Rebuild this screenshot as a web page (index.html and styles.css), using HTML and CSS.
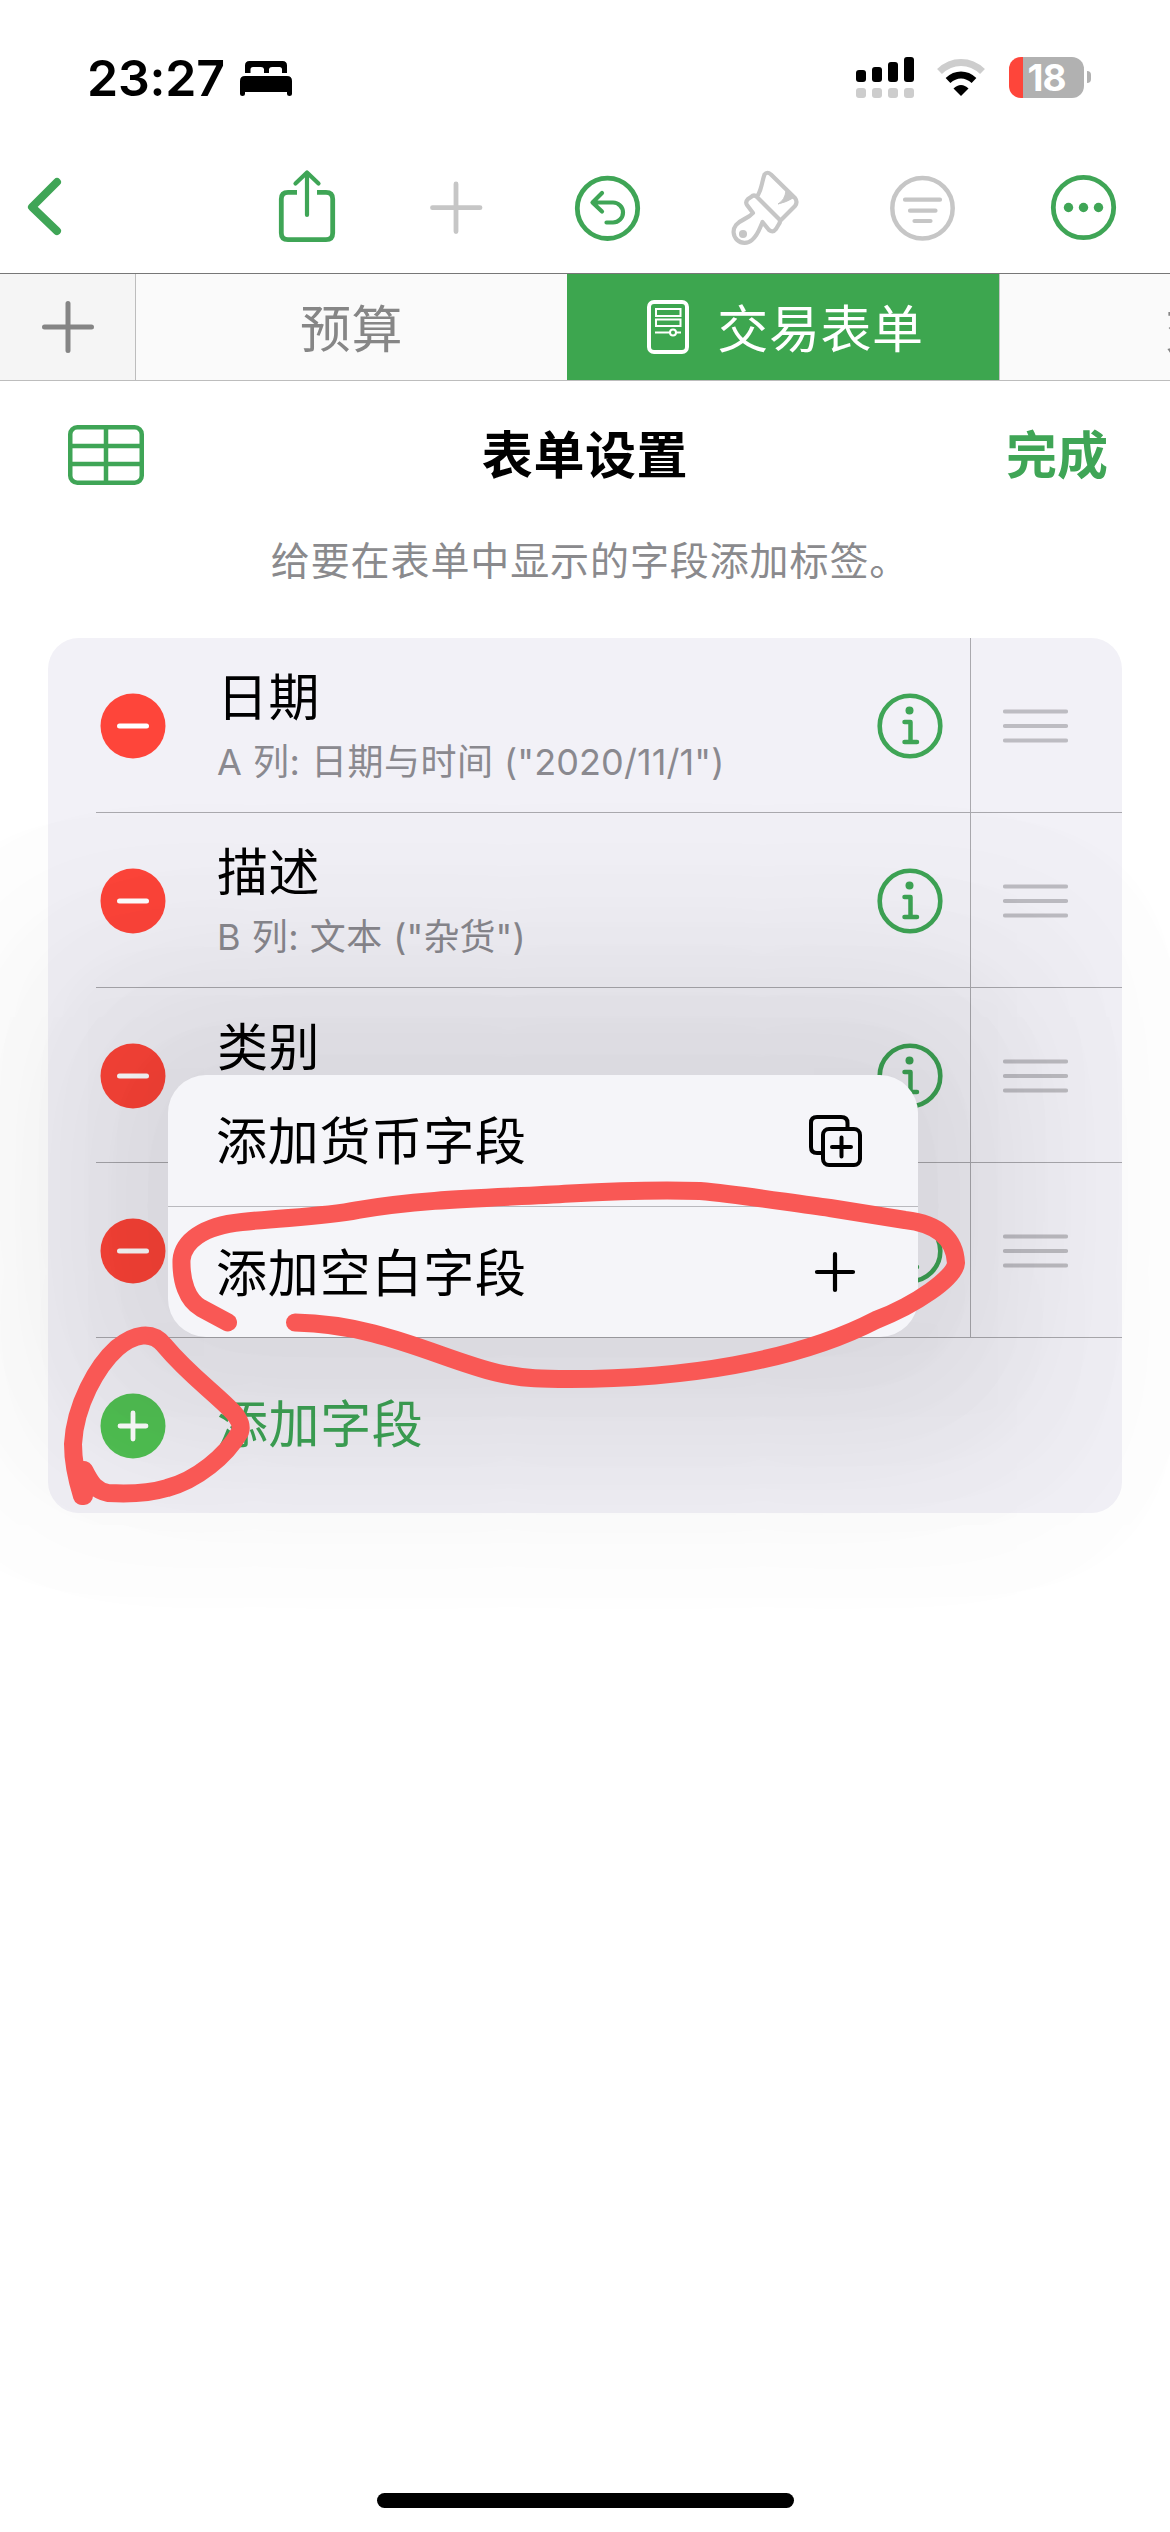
FILE: index.html
```html
<!DOCTYPE html>
<html lang="zh-CN">
<head>
<meta charset="utf-8">
<title>表单设置</title>
<link rel="stylesheet" href="styles.css">
</head>
<body>
<div class="screen">
  <header class="status">
    <span class="time">23:27</span>
    <svg class="bed" width="52" height="35" viewBox="0 0 52 35"><path d="M5 12V4.500Q5 0 9.500 0H42.500Q47 0 47 4.500V12H42V8.500Q42 6 39.500 6H32Q29.500 6 29 8V12H24V8Q23.500 6 21 6H13Q10.500 6 10.500 8.500V12Z"/><path d="M0 33V20Q0 15 5 15H47Q52 15 52 20V33Q52 35 49.500 35Q47 35 47 33V31H5V33Q5 35 2.500 35Q0 35 0 33Z"/></svg>
    <svg class="signal" width="58" height="41" viewBox="0 0 58 41"><rect x="0" y="13" width="10" height="12" rx="3"/><rect x="16" y="10" width="10" height="15" rx="3"/><rect x="32" y="5" width="10" height="20" rx="3"/><rect x="48" y="0" width="10" height="25" rx="3"/><g fill="#cdcdcd"><rect x="0" y="31" width="10" height="10" rx="3"/><rect x="16" y="31" width="10" height="10" rx="3"/><rect x="32" y="31" width="10" height="10" rx="3"/><rect x="48" y="31" width="10" height="10" rx="3"/></g></svg>
    <svg class="wifi" width="50" height="38" viewBox="0 0 50 38"><path d="M3.500 12.500Q13 3.500 25 3.500T46.500 12.500" fill="none" stroke="#cdcdcd" stroke-width="7"/><path d="M12 21.500Q18 16 25 16T38 21.500" fill="none" stroke="#000" stroke-width="7"/><path d="M17.500 29.500Q21 26 25 26T32.500 29.500L25 37Z"/></svg>
    <div class="battery"><span class="level">18</span></div><i class="nub"></i>
  </header>

  <nav class="toolbar">
    <svg width="1170" height="173" viewBox="0 100 1170 173" fill="none" stroke="#3fa556" stroke-width="4.800" stroke-linecap="round" stroke-linejoin="round">
      <path d="M57 182L32 207L57 231" stroke-width="8"/>
      <path d="M297 192.300H288Q281.300 192.300 281.300 199V233Q281.300 239.700 288 239.700H326Q332.700 239.700 332.700 233V199Q332.700 192.300 326 192.300H317" stroke-linecap="butt"/>
      <path d="M307 215V172.500M295.500 183.500L307 172.500L318.500 183.500" stroke-width="4.200"/>
      <path d="M432.500 207.700H480M456 184V231.500" stroke="#c6c6c6"/>
      <circle cx="607.500" cy="208.300" r="30.200"/>
      <path d="M602 193L592.500 202.500L602 211.500M594 202.500H613A10 10 0 0 1 613 222.500H606.500" stroke-width="4.200"/>
      <g stroke="#c6c6c6" stroke-width="4.200">
        <path d="M758 195C762 188 762 181 764.500 174.500Q767 171 771 174.500L795 198Q798 202 795 206L781 220"/>
        <path d="M757 197L779 219Q781 221 779 224L776 229Q773 233 769 230L762.500 222C759 230 758 235 752 240A11 11 0 0 1 736 225C741 219 748 219 753 213L747 205Q745 202 748 199L751 197Q754 194 757 197Z"/>
        <circle cx="743" cy="234" r="2.800" fill="#c6c6c6" stroke-width="2.500"/>
        <path d="M786 191Q785 200 778 204Q787 202 793 198Z" fill="#c6c6c6" stroke-width="1"/>
      </g>
      <g stroke="#c6c6c6"><circle cx="922.500" cy="208.300" r="30.200" stroke-width="4.500"/><path d="M905 199.700H940M910 210.700H935.500M914.500 221H930.500" stroke-width="4.200"/></g>
      <circle cx="1083.500" cy="207.500" r="30.200"/>
      <g fill="#3fa556" stroke="none"><circle cx="1068.500" cy="207.500" r="4.700"/><circle cx="1083.500" cy="207.500" r="4.700"/><circle cx="1098.500" cy="207.500" r="4.700"/></g>
    </svg>
  </nav>

  <div class="tabs">
    <div class="tab add"><svg width="52" height="52" viewBox="0 0 52 52"><path d="M2.500 26H49.500M26 2.500V49.500" stroke="#858585" stroke-width="5" stroke-linecap="round"/></svg></div>
    <div class="tab sheet">预算</div>
    <div class="tab active">
      <svg width="42" height="54" viewBox="0 0 42 54" fill="none" stroke="#fff"><rect x="2" y="2" width="38" height="50" rx="5" stroke-width="4"/><path d="M8 32.500H34" stroke-width="2"/><rect x="9" y="9" width="24.500" height="7" stroke-width="2"/><rect x="9" y="19.500" width="24.500" height="6.500" stroke-width="2"/><circle cx="26" cy="32.500" r="3" fill="#3da64f" stroke-width="2"/></svg>
      <span>交易表单</span>
    </div>
    <div class="tab next">交易</div>
  </div>

  <div class="heading">
    <svg width="76" height="60" viewBox="0 0 76 60" fill="none" stroke="#3fa556" stroke-width="4.500"><rect x="2.250" y="2.250" width="71.500" height="55.500" rx="7"/><path d="M2 21H74M2 39H74M38 2V58"/></svg>
    <h1>表单设置</h1>
    <span class="done">完成</span>
  </div>
  <p class="hint">给要在表单中显示的字段添加标签。</p>

  <svg class="defs" width="0" height="0">
    <symbol id="minus" viewBox="0 0 66 66"><circle cx="33" cy="33" r="32.500" fill="#fe453a"/><path d="M19.500 33H46.500" stroke="#fff" stroke-width="5" stroke-linecap="round"/></symbol>
    <symbol id="info" viewBox="0 0 66 66"><circle cx="33" cy="33" r="30.300" fill="none" stroke="#3fa556" stroke-width="4.600"/><circle cx="32.500" cy="17.500" r="4" fill="#3fa556"/><path d="M27.500 29H33.500V49M27.500 49H40" fill="none" stroke="#3fa556" stroke-width="4.500" stroke-linecap="round" stroke-linejoin="round"/></symbol>
    <symbol id="grip" viewBox="0 0 65 34"><path d="M2 2.500H63M2 17H63M2 31.500H63" stroke="#bdbcc2" stroke-width="4.200" stroke-linecap="round"/></symbol>
  </svg>

  <main class="list">
    <div class="row"><svg class="badge"><use href="#minus"/></svg><div class="cell"><div class="labels"><b>日期</b><small>A 列: 日期与时间 <span class="sample">("2020/11/1")</span></small></div><svg class="info"><use href="#info"/></svg><div class="handle"><svg class="grip"><use href="#grip"/></svg></div></div></div>
    <div class="row"><svg class="badge"><use href="#minus"/></svg><div class="cell"><div class="labels"><b>描述</b><small>B 列: 文本 <span class="sample">("杂货")</span></small></div><svg class="info"><use href="#info"/></svg><div class="handle"><svg class="grip"><use href="#grip"/></svg></div></div></div>
    <div class="row"><svg class="badge"><use href="#minus"/></svg><div class="cell"><div class="labels"><b>类别</b></div><svg class="info"><use href="#info"/></svg><div class="handle"><svg class="grip"><use href="#grip"/></svg></div></div></div>
    <div class="row"><svg class="badge"><use href="#minus"/></svg><div class="cell"><div class="labels"></div><svg class="info"><use href="#info"/></svg><div class="handle"><svg class="grip"><use href="#grip"/></svg></div></div></div>
    <div class="row last"><svg class="badge" viewBox="0 0 66 66"><circle cx="33" cy="33" r="32.500" fill="#52c254"/><path d="M20 33H46M33 20V46" stroke="#fff" stroke-width="4.800" stroke-linecap="round"/></svg><div class="cell"><span class="add-field">添加字段</span></div></div>
  </main>

  <div class="menu">
    <div class="item"><span>添加货币字段</span><svg width="53" height="52" viewBox="0 0 53 52" fill="none" stroke="#000" stroke-width="4" stroke-linecap="round"><path d="M12 38H8Q2 38 2 32V8Q2 2 8 2H32Q38.500 2 38.500 8V12" stroke-linecap="butt"/><rect x="14" y="14" width="37" height="36" rx="6"/><path d="M23 32H42M32.500 22.500V41.500"/></svg></div>
    <div class="item"><span>添加空白字段</span><svg width="53" height="42" viewBox="0 0 53 42"><path d="M8 21H44M26 3V39" stroke="#000" stroke-width="4.200" stroke-linecap="round"/></svg></div>
  </div>

  <svg class="ink" width="1170" height="2532" viewBox="0 0 1170 2532" fill="none" stroke="#f95855" stroke-width="18" stroke-linecap="round" stroke-linejoin="round">
    <path d="M228 1322.500L201 1308C187 1300 181 1281 181.500 1260C183 1242 202 1226 242 1222C290 1217 322 1217 358 1210C428 1198 500 1198 570 1193.500C615 1191 665 1190 700 1191C745 1195 790 1203 830 1208L905 1220C940 1224 955 1240 956 1263C955 1278 915 1305 876 1320C795 1362 680 1379 570 1379C545 1379 525 1379 498 1373C440 1359 380 1324 295 1322.500"/>
    <path d="M82 1496C77 1480 73 1460 73 1444C75 1405 97 1366 117 1348C134 1334 152 1330 164 1345C190 1376 213 1391 233 1412C240 1420 242 1426 240 1432C226 1456 197 1480 167 1488C147 1494 125 1494 108 1493C93 1490 90 1480 84 1470V1496"/>
  </svg>
  <div class="home"></div>
</div>
</body>
</html>
```
FILE: styles.css
```css
* { box-sizing: border-box; }
body { margin: 0; background: #fff; font-family: Inter, "Noto Sans CJK SC", sans-serif; color: #000; }
svg { display: block; flex: none; }
.defs { position: absolute; }
.screen { position: relative; width: 1170px; height: 2532px; overflow: hidden; background: #fff; display: flex; flex-direction: column; }
.status { height: 100px; display: flex; align-items: flex-start; padding: 57px 79px 0 87px; }
.time { width: 153px; font-size: 50px; font-weight: 600; line-height: 42px; letter-spacing: -.2px; }
.bed { margin-top: 4px; }
.signal { margin-left: auto; }
.wifi { margin: 2px 23px 0 22px; }
.battery { width: 75px; height: 41px; border-radius: 12px; background: linear-gradient(90deg, #fe453a 14px, #b1b1b1 14px); text-align: center; }
.level { display: block; color: #fff; font-size: 37px; font-weight: 700; line-height: 42px; letter-spacing: -1px; }
.nub { width: 4px; height: 12px; margin: 14px 0 0 3px; border-radius: 0 4px 4px 0; background: #b1b1b1; }
.toolbar { height: 173px; }
.tabs { height: 108px; display: flex; border-top: 1px solid #777; border-bottom: 1px solid #bdbdbd; background: #fafafa; color: #868686; font-size: 51px; letter-spacing: .6px; }
.tab { display: flex; align-items: center; justify-content: center; white-space: nowrap; }
.add { width: 136px; background: #f5f5f5; border-right: 1px solid #bdbdbd; }
.sheet { width: 431px; padding-bottom: 3px; }
.active { width: 432px; gap: 28px; padding-left: 5px; background: #3da64f; color: #fff; }
.active span { padding-bottom: 3px; }
.next { flex: 1; justify-content: flex-start; padding: 0 0 3px 165px; border-left: 1px solid #c4c4c4; overflow: hidden; }
.heading { height: 147px; padding: 0 62px 0 68px; display: grid; grid-template-columns: 1fr auto 1fr; align-items: center; }
h1 { margin: 0; font-size: 51px; font-weight: 700; letter-spacing: .6px; }
.heading h1, .done { line-height: 60px; padding-top: 3px; }
.heading h1 { padding-right: 6px; }
.done { justify-self: end; color: #3fa556; font-size: 51px; font-weight: 700; }
.hint { margin: 0; height: 110px; padding: 3px 0 0 10px; line-height: 60px; text-align: center; font-size: 39px; letter-spacing: .9px; color: #8a8a8d; }
.list { width: 1074px; height: 875px; margin-left: 48px; border-radius: 31px; overflow: hidden; background: #f2f1f7; }
.row { display: flex; height: 175px; padding-left: 48px; }
.badge { width: 66px; height: 66px; margin: 55px -70px 0 4px; }
.cell { flex: 1; display: flex; border-bottom: 1px solid #aaa9ae; padding-left: 121px; }
.last .cell { border: 0; }
.labels { width: 660px; display: flex; flex-direction: column; padding-top: 29px; }
.labels b { font-size: 51px; font-weight: 400; line-height: 62px; letter-spacing: .4px; }
.labels small { font-size: 36px; line-height: 50px; margin-top: 8px; color: #8a898f; letter-spacing: .5px; white-space: nowrap; }
.sample { letter-spacing: .1px; }
.info { width: 66px; height: 66px; margin: 55px 27px 0 0; }
.handle { border-left: 1px solid #aaa9ae; flex: 1; padding: 71px 0 0 32px; }
.grip { width: 65px; height: 34px; }
.add-field { font-size: 51px; line-height: 62px; padding-top: 56px; letter-spacing: .6px; color: #3fa556; }
.menu {
  position: absolute; left: 168px; top: 1075px; width: 750px; height: 262px; border-radius: 38px; background: #f5f5f9;
  box-shadow: 0 0 110px 20px rgba(0,0,0,.016), 0 0 130px 70px rgba(0,0,0,.034), 0 0 140px 130px rgba(0,0,0,.03), 0 0 150px 200px rgba(0,0,0,.022), 0 0 150px 260px rgba(0,0,0,.009);
}
.item { height: 131px; padding: 0 56px 0 48px; display: flex; align-items: center; justify-content: space-between; font-size: 51px; letter-spacing: .8px; }
.item span { padding-bottom: 5px; }
.item + .item { border-top: 1px solid #b9b9be; }
.ink { position: absolute; left: 0; top: 0; }
.home { width: 417px; height: 15px; margin: auto auto 24px 377px; border-radius: 8px; background: #000; }
```
